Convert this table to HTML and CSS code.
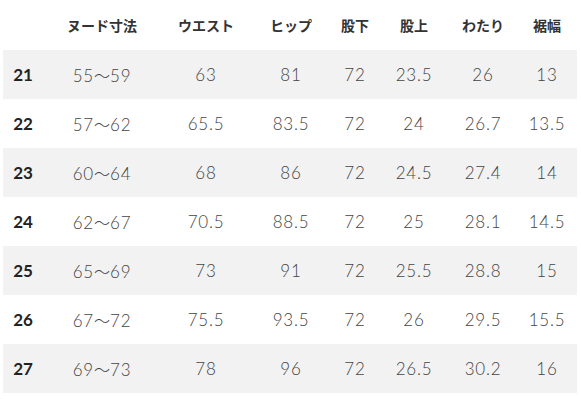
FILE: index.html
```html
<!DOCTYPE html>
<html lang="ja">
<head>
<meta charset="utf-8">
<link rel="stylesheet" href="styles.css">
</head>
<body>
<div class="table">
  <div class="row head">
    <div class="cell"></div>
    <div class="cell">ヌード寸法</div>
    <div class="cell">ウエスト</div>
    <div class="cell">ヒップ</div>
    <div class="cell">股下</div>
    <div class="cell">股上</div>
    <div class="cell">わたり</div>
    <div class="cell">裾幅</div>
  </div>
  <div class="row odd">
    <div class="cell label">21</div><div class="cell">55<span class="tilde">～</span>59</div><div class="cell">63</div><div class="cell">81</div><div class="cell">72</div><div class="cell">23.5</div><div class="cell">26</div><div class="cell">13</div>
  </div>
  <div class="row">
    <div class="cell label">22</div><div class="cell">57<span class="tilde">～</span>62</div><div class="cell">65.5</div><div class="cell">83.5</div><div class="cell">72</div><div class="cell">24</div><div class="cell">26.7</div><div class="cell">13.5</div>
  </div>
  <div class="row odd">
    <div class="cell label">23</div><div class="cell">60<span class="tilde">～</span>64</div><div class="cell">68</div><div class="cell">86</div><div class="cell">72</div><div class="cell">24.5</div><div class="cell">27.4</div><div class="cell">14</div>
  </div>
  <div class="row">
    <div class="cell label">24</div><div class="cell">62<span class="tilde">～</span>67</div><div class="cell">70.5</div><div class="cell">88.5</div><div class="cell">72</div><div class="cell">25</div><div class="cell">28.1</div><div class="cell">14.5</div>
  </div>
  <div class="row odd">
    <div class="cell label">25</div><div class="cell">65<span class="tilde">～</span>69</div><div class="cell">73</div><div class="cell">91</div><div class="cell">72</div><div class="cell">25.5</div><div class="cell">28.8</div><div class="cell">15</div>
  </div>
  <div class="row">
    <div class="cell label">26</div><div class="cell">67<span class="tilde">～</span>72</div><div class="cell">75.5</div><div class="cell">93.5</div><div class="cell">72</div><div class="cell">26</div><div class="cell">29.5</div><div class="cell">15.5</div>
  </div>
  <div class="row odd">
    <div class="cell label">27</div><div class="cell">69<span class="tilde">～</span>73</div><div class="cell">78</div><div class="cell">96</div><div class="cell">72</div><div class="cell">26.5</div><div class="cell">30.2</div><div class="cell">16</div>
  </div>
</div>
</body>
</html>
```

FILE: styles.css
```css
html, body {
  margin: 0;
  padding: 0;
  background: #ffffff;
}
body {
  font-family: Lato, "Noto Sans CJK JP", sans-serif;
}
.table {
  width: 574px;
  margin-left: 3px;
  display: flex;
  flex-direction: column;
}
.row {
  display: grid;
  grid-template-columns: 40px 118px 90px 80px 48px 70px 68px 60px;
  height: 49px;
  align-items: center;
  text-align: center;
  font-size: 17px;
  font-weight: 300;
  color: #444444;
  letter-spacing: 0.8px;
}
.tilde {
  font-family: "Noto Sans CJK JP", sans-serif;
  font-weight: 300;
  font-size: 16px;
  letter-spacing: 0;
}
.row.head {
  height: 50px;
  font-family: "Noto Sans CJK JP", sans-serif;
  font-size: 14px;
  font-weight: 700;
  color: #333333;
  letter-spacing: 0;
}
.row.odd {
  background: #f2f2f2;
}
.cell.label {
  font-weight: 700;
  color: #222222;
  letter-spacing: 0;
}
```
